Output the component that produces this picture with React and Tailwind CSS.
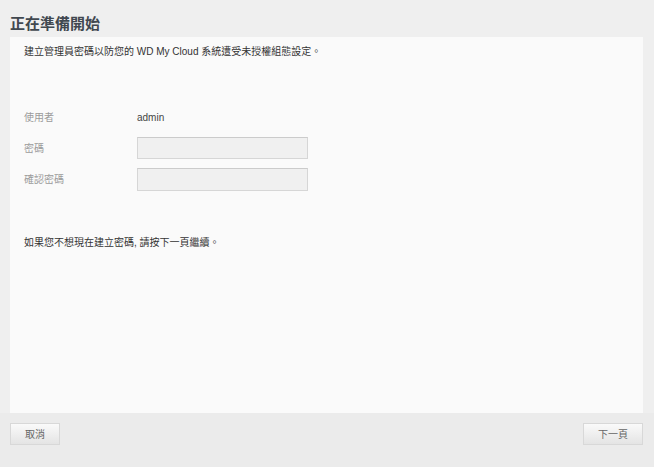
import React, { useState } from 'react';

const font = { fontFamily: '"Liberation Sans", "Noto Sans CJK TC", sans-serif' };

const App = () => {
  const [password, setPassword] = useState('');
  const [confirm, setConfirm] = useState('');

  return (
    <div className="flex h-[467px] w-full flex-col bg-[#efefef] text-[#333]" style={font}>
      {/* title */}
      <div className="flex h-[37px] items-end px-[10px] pb-[6px]">
        <h1 className="text-[15px] font-bold leading-none text-[#414850]">正在準備開始</h1>
      </div>

      {/* content panel */}
      <div className="ml-[10px] mr-[11px] flex h-[376px] flex-col bg-[#fafafa] px-[14px] pt-[8px]">
        <p className="text-[10px] leading-[14px] text-[#333]">
          建立管理員密碼以防您的 WD My Cloud 系統遭受未授權組態設定。
        </p>

        <div className="mt-[47px] flex h-[22px] items-center">
          <span className="w-[113px] text-[10px] text-[#9a9a9a]">使用者</span>
          <span className="text-[10px] text-[#444]">admin</span>
        </div>

        <div className="mt-[9px] flex h-[22px] items-center">
          <label className="w-[113px] text-[10px] text-[#9a9a9a]">密碼</label>
          <input
            type="password"
            value={password}
            onChange={(e) => setPassword(e.target.value)}
            className="h-[22px] w-[171px] border border-[#d6d6d6] border-t-[#cbcbcb] bg-[#f0f0f0] px-2 text-[10px] outline-none"
          />
        </div>

        <div className="mt-[9px] flex h-[23px] items-center">
          <label className="w-[113px] text-[10px] text-[#9a9a9a]">確認密碼</label>
          <input
            type="password"
            value={confirm}
            onChange={(e) => setConfirm(e.target.value)}
            className="h-[23px] w-[171px] border border-[#d6d6d6] border-t-[#cbcbcb] bg-[#f0f0f0] px-2 text-[10px] outline-none"
          />
        </div>

        <p className="mt-[45px] text-[10px] leading-[14px] text-[#333]">
          如果您不想現在建立密碼, 請按下一頁繼續。
        </p>
      </div>

      {/* footer buttons */}
      <div className="flex flex-1 justify-between bg-[#ebebeb] pl-[10px] pr-[11px] pt-[10px]">
        <button className="h-[22px] w-[50px] border border-[#d8d8d8] bg-gradient-to-b from-[#fafafa] to-[#e4e4e4] text-[10px] text-[#666]">
          取消
        </button>
        <button className="h-[22px] w-[60px] border border-[#d8d8d8] bg-gradient-to-b from-[#fafafa] to-[#e4e4e4] text-[10px] text-[#666]">
          下一頁
        </button>
      </div>
    </div>
  );
};

export default App;
